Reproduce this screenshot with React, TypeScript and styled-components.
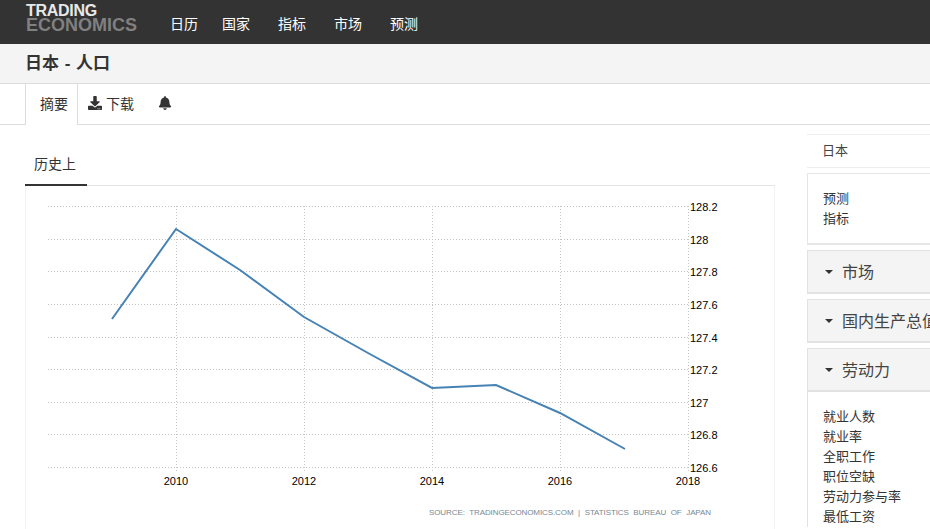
import React from 'react';
import styled, { createGlobalStyle } from 'styled-components';
import { FaBell, FaDownload } from 'react-icons/fa';

const GlobalStyle = createGlobalStyle`
  html, body {
    margin: 0;
    padding: 0;
    height: 529px;
    overflow: hidden;
    background: #fff;
    font-family: "Liberation Sans", "Noto Sans CJK SC", sans-serif;
  }
`;

const Page = styled.div`
  width: 930px;
  height: 529px;
  overflow: hidden;
`;

const NavBar = styled.header`
  height: 44px;
  background: #333;
  display: flex;
  align-items: flex-start;
  padding-left: 26px;
`;

const Logo = styled.div`
  width: 144px;
  padding-top: 4px;
  font-weight: 700;
  font-size: 16px;
  line-height: 14px;
  letter-spacing: -0.3px;
  color: #e8e8e8;
`;

const LogoLower = styled.div`
  color: #808080;
  font-size: 18px;
  letter-spacing: 0;
`;

const NavLinks = styled.nav`
  display: flex;
  gap: 28px;
  padding-top: 14px;
`;

const NavLink = styled.a`
  color: #fff;
  font-size: 14px;
  line-height: 20px;

  &:first-child {
    margin-right: -4px;
  }
`;

const TitleBar = styled.div`
  height: 39px;
  background: #f4f4f4;
  border-bottom: 1px solid #ddd;
  padding-left: 25px;
`;

const Title = styled.h1`
  margin: 0;
  font-size: 17px;
  line-height: 39px;
  font-weight: 700;
  word-spacing: 1px;
  color: #333;
`;

const TabRow = styled.div`
  height: 40px;
  border-bottom: 1px solid #ddd;
  padding-left: 25px;
  display: flex;
  align-items: stretch;
`;

const ActiveTab = styled.div`
  width: 53px;
  height: 41px;
  box-sizing: border-box;
  border: 1px solid #ddd;
  border-width: 0 1px;
  background: #fff;
  padding-left: 14px;
  font-size: 14px;
  line-height: 40px;
  color: #333;
`;

const IconTab = styled.div<{ $width: number }>`
  width: ${({ $width }) => $width}px;
  display: flex;
  align-items: center;
  gap: 4px;
  padding-left: 10px;
  padding-bottom: 2px;
  box-sizing: border-box;
  font-size: 14px;
  color: #333;
`;

const Columns = styled.div`
  display: flex;
  align-items: flex-start;
`;

const Main = styled.main`
  width: 750px;
  margin-left: 25px;
  padding-top: 27px;
`;

const ChartTabs = styled.div`
  height: 33px;
  border-bottom: 1px solid #e4e4e4;
`;

const ChartTab = styled.div`
  width: 62px;
  height: 34px;
  box-sizing: border-box;
  padding-left: 9px;
  border-bottom: 2px solid #333;
  font-size: 14px;
  line-height: 24px;
  color: #333;
`;

const ChartCard = styled.div`
  height: 343px;
  padding-top: 1px;
  border: 1px solid #f2f2f2;
  border-width: 0 1px;
`;

const Sidebar = styled.aside`
  width: 160px;
  margin-left: 32px;
  padding-top: 9px;
  display: flex;
  flex-direction: column;
  gap: 5px;
  flex-shrink: 0;
`;

const CountryBox = styled.div`
  height: 34px;
  box-sizing: border-box;
  border: 1px solid #eeeef2;
  border-width: 1px 0;
  padding-left: 15px;
  font-size: 13px;
  line-height: 32px;
  color: #444;
`;

const LinkBox = styled.div`
  height: 72px;
  box-sizing: border-box;
  border: 1px solid #e6e6e6;
  border-right: none;
  border-bottom-width: 2px;
  padding: 15px 0 0 15px;
`;

const SideLink = styled.div`
  font-size: 13px;
  line-height: 20px;
  color: #333;
  white-space: nowrap;
`;

const Section = styled.div`
  height: 44px;
  box-sizing: border-box;
  background: #f4f4f4;
  border: 1px solid #e2e2e2;
  border-right: none;
  border-bottom-width: 2px;
  display: flex;
  align-items: center;
  padding: 0 0 2px 17px;
  gap: 9px;
  font-size: 16px;
  color: #444;
  white-space: nowrap;
`;

const Caret = styled.span`
  width: 0;
  height: 0;
  margin-top: 2px;
  border-left: 4px solid transparent;
  border-right: 4px solid transparent;
  border-top: 4px solid #333;
`;

const OpenList = styled.div`
  border-left: 1px solid #e2e2e2;
  padding: 15px 0 0 15px;
  margin-top: -5px;
`;

const ChartSvg = styled.svg`
  display: block;
`;

const AxisLabel = styled.text`
  font-family: "Liberation Sans", sans-serif;
  font-size: 11px;
  fill: #000;
`;

const SourceLabel = styled.text`
  font-family: "Liberation Sans", sans-serif;
  font-size: 8px;
  letter-spacing: -0.1px;
  word-spacing: 2.5px;
  fill: #7a8794;
`;

const navItems = ['日历', '国家', '指标', '市场', '预测'];
const labourItems = ['就业人数', '就业率', '全职工作', '职位空缺', '劳动力参与率', '最低工资'];

// coordinates are relative to the svg, whose corner sits at (26, 187) on the page
const yTicks = [
  { label: '128.2', y: 19 },
  { label: '128', y: 52 },
  { label: '127.8', y: 84 },
  { label: '127.6', y: 117 },
  { label: '127.4', y: 150 },
  { label: '127.2', y: 182 },
  { label: '127', y: 215 },
  { label: '126.8', y: 247 },
  { label: '126.6', y: 280 },
];
const xTicks = [
  { label: '2010', x: 150 },
  { label: '2012', x: 278 },
  { label: '2014', x: 406 },
  { label: '2016', x: 534 },
  { label: '2018', x: 662 },
];
const series = '86,132 150,42 214,83 278,130 342,166 406,201 470,198 534,226 599,262';

const Chart: React.FC = () => (
  <ChartSvg width={748} height={342} viewBox="0 0 748 342">
    {yTicks.map(({ label, y }) => (
      <g key={label}>
        <line x1={22} x2={662} y1={y + 0.5} y2={y + 0.5} stroke="#c4c4c4" strokeDasharray="1 2" />
        <AxisLabel x={664} y={y + 5}>{label}</AxisLabel>
      </g>
    ))}
    {xTicks.map(({ label, x }) => (
      <g key={label}>
        <line x1={x + 0.5} x2={x + 0.5} y1={19} y2={285} stroke="#c4c4c4" strokeDasharray="1 2" />
        <AxisLabel x={x} y={298} textAnchor="middle">{label}</AxisLabel>
      </g>
    ))}
    <polyline points={series} fill="none" stroke="#4682b4" strokeWidth={2} />
    <SourceLabel x={403} y={328}>SOURCE: TRADINGECONOMICS.COM | STATISTICS BUREAU OF JAPAN</SourceLabel>
  </ChartSvg>
);

const App: React.FC = () => (
  <Page>
    <GlobalStyle />
    <NavBar>
      <Logo>
        TRADING
        <LogoLower>ECONOMICS</LogoLower>
      </Logo>
      <NavLinks>
        {navItems.map((item) => (
          <NavLink key={item}>{item}</NavLink>
        ))}
      </NavLinks>
    </NavBar>
    <TitleBar>
      <Title>日本 - 人口</Title>
    </TitleBar>
    <TabRow>
      <ActiveTab>摘要</ActiveTab>
      <IconTab $width={70}>
        <FaDownload size={14} />
        下载
      </IconTab>
      <IconTab $width={40}>
        <FaBell size={14} />
      </IconTab>
    </TabRow>
    <Columns>
      <Main>
        <ChartTabs>
          <ChartTab>历史上</ChartTab>
        </ChartTabs>
        <ChartCard>
          <Chart />
        </ChartCard>
      </Main>
      <Sidebar>
        <CountryBox>日本</CountryBox>
        <LinkBox>
          <SideLink>预测</SideLink>
          <SideLink>指标</SideLink>
        </LinkBox>
        <Section>
          <Caret />
          市场
        </Section>
        <Section>
          <Caret />
          国内生产总值
        </Section>
        <Section>
          <Caret />
          劳动力
        </Section>
        <OpenList>
          {labourItems.map((item) => (
            <SideLink key={item}>{item}</SideLink>
          ))}
        </OpenList>
      </Sidebar>
    </Columns>
  </Page>
);

export default App;
